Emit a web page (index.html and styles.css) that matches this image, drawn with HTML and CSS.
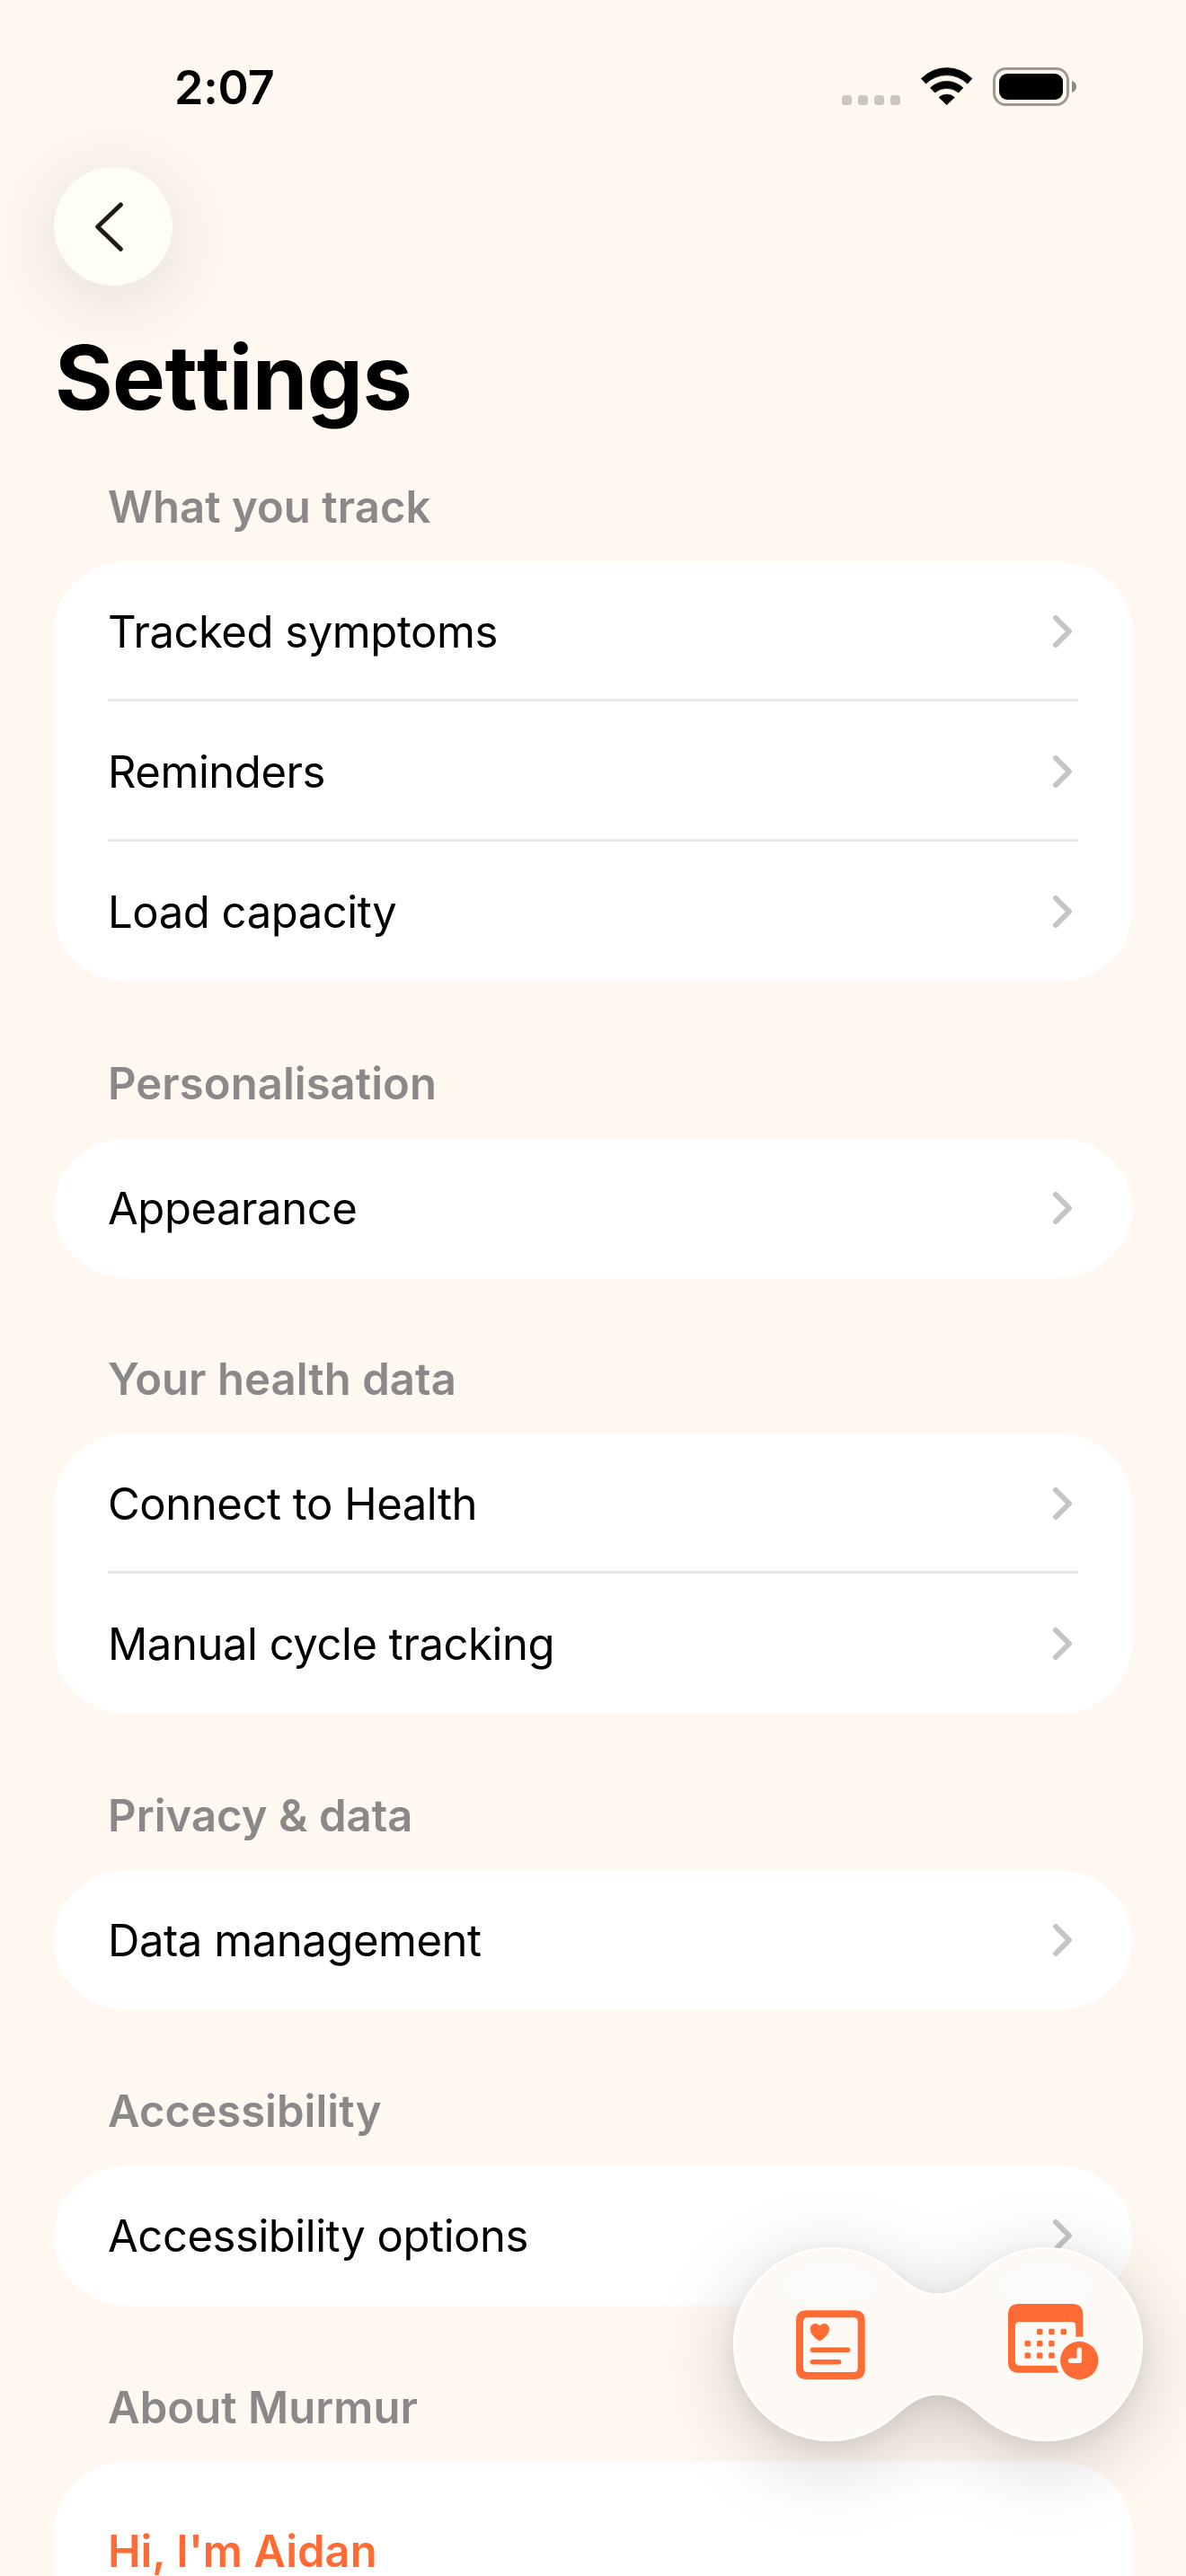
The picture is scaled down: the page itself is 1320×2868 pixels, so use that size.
FILE: index.html
```html
<!DOCTYPE html>
<html lang="en">
<head>
<meta charset="utf-8">
<title>Settings</title>
<link rel="stylesheet" href="styles.css">
</head>
<body>
<svg class="defs" width="0" height="0" aria-hidden="true">
  <symbol id="chevron" viewBox="0 0 30 36">
    <path d="M5 3L20 18L5 33" fill="none" stroke="#c5c5c7" stroke-width="6" stroke-linecap="round" stroke-linejoin="round"/>
  </symbol>
</svg>
<div class="screen">
  <div class="status">
    <span class="time">2:07</span>
    <div class="status-icons">
      <svg width="65" height="44" viewBox="0 0 65 44" fill="#ccc6c0">
        <rect x="0" y="31" width="11" height="11" rx="3.5"/>
        <rect x="18" y="31" width="11" height="11" rx="3.5"/>
        <rect x="36" y="31" width="11" height="11" rx="3.5"/>
        <rect x="54" y="31" width="11" height="11" rx="3.5"/>
      </svg>
      <svg width="60" height="44" viewBox="0 1 60 44" fill="#000" stroke="#000" stroke-width=".8" stroke-linejoin="round">
        <path d="M1.5 13.5A39.3 39.3 0 0 1 57.8 13.5L52.8 19.1A33 33 0 0 0 6.5 19.1Z"/>
        <path d="M11.5 23.7A26.6 26.6 0 0 1 47.8 23.7L42.8 29A20.7 20.7 0 0 0 16.5 29Z"/>
        <path d="M21.1 34.4A13 13 0 0 1 38.3 34.4L29.7 42.6Z"/>
      </svg>
      <svg width="94" height="44" viewBox="0 0 94 44">
        <rect x="1.5" y="1.5" width="82" height="40" rx="13" fill="none" stroke="#9c9892" stroke-width="3"/>
        <rect x="7" y="7" width="71" height="29" rx="9" fill="#000"/>
        <path d="M88 15C91 16 93 18.500 93 21.500S91 27 88 28Z" fill="#8c8883"/>
      </svg>
    </div>
  </div>

  <button class="back" aria-label="Back">
    <svg width="36" height="60" viewBox="0 0 36 60"><path d="M31.300 6L5.700 30.500L31.300 55.300" fill="none" stroke="#1f1a14" stroke-width="5" stroke-linecap="round" stroke-linejoin="round"/></svg>
  </button>
  <h1 class="title">Settings</h1>

  <section class="group">
    <h2 class="group-title">What you track</h2>
    <div class="card">
      <div class="row"><span>Tracked symptoms</span><svg class="chevron"><use href="#chevron"/></svg></div>
      <div class="row"><span>Reminders</span><svg class="chevron"><use href="#chevron"/></svg></div>
      <div class="row"><span>Load capacity</span><svg class="chevron"><use href="#chevron"/></svg></div>
    </div>
  </section>
  <section class="group">
    <h2 class="group-title">Personalisation</h2>
    <div class="card">
      <div class="row"><span>Appearance</span><svg class="chevron"><use href="#chevron"/></svg></div>
    </div>
  </section>
  <section class="group">
    <h2 class="group-title">Your health data</h2>
    <div class="card">
      <div class="row"><span>Connect to Health</span><svg class="chevron"><use href="#chevron"/></svg></div>
      <div class="row"><span>Manual cycle tracking</span><svg class="chevron"><use href="#chevron"/></svg></div>
    </div>
  </section>
  <section class="group">
    <h2 class="group-title">Privacy &amp; data</h2>
    <div class="card">
      <div class="row"><span>Data management</span><svg class="chevron"><use href="#chevron"/></svg></div>
    </div>
  </section>
  <section class="group">
    <h2 class="group-title">Accessibility</h2>
    <div class="card">
      <div class="row"><span>Accessibility options</span><svg class="chevron"><use href="#chevron"/></svg></div>
    </div>
  </section>
  <section class="group">
    <h2 class="group-title">About Murmur</h2>
    <div class="card about"><p class="hello">Hi, I'm Aidan</p></div>
  </section>

  <nav class="dock">
    <svg class="dock-shape" width="456" height="216" viewBox="0 0 456 216">
      <defs>
        <radialGradient id="shine">
          <stop offset="0" stop-color="#fbfbfb"/>
          <stop offset=".7" stop-color="#fbfbfb" stop-opacity=".8"/>
          <stop offset="1" stop-color="#fbfbfb" stop-opacity="0"/>
        </radialGradient>
        <clipPath id="blob">
          <path id="blob-path" d="M180 27.500C196 41.800 209 51.500 228 51.500C247 51.500 260 41.800 276 27.500A108 108 0 1 1 276 188.500C260 174.200 247 164.500 228 164.500C209 164.500 196 174.200 180 188.500A108 108 0 1 1 180 27.500Z"/>
        </clipPath>
      </defs>
      <use class="blob" href="#blob-path"/>
      <g clip-path="url(#blob)">
        <ellipse cx="108" cy="42" rx="62" ry="28" fill="url(#shine)"/>
        <ellipse cx="348" cy="42" rx="62" ry="28" fill="url(#shine)"/>
        <use href="#blob-path" class="rim"/>
      </g>
      <!-- Health log -->
      <g fill="#ff6b35">
        <path fill-rule="evenodd" d="M81.500 70.300H135.200Q146.700 70.300 146.700 81.800V135.500Q146.700 147 135.200 147H81.500Q70 147 70 135.500V81.800Q70 70.300 81.500 70.300ZM83 78.300Q78 78.300 78 83.300V134Q78 139 83 139H133.700Q138.700 139 138.700 134V83.300Q138.700 78.300 133.700 78.300Z"/>
        <path d="M96.350 104.300C95.200 104.300 85.700 98 85.700 91C85.700 87.500 88.200 85 91.300 85C93.500 85 95.400 86.100 96.350 87.600C97.300 86.100 99.200 85 101.400 85C104.500 85 107 87.500 107 91C107 98 97.500 104.300 96.350 104.300Z"/>
      </g>
      <path d="M88.400 114.200H127.600M88.400 127.700H117.600" stroke="#ff6b35" stroke-width="5.500" stroke-linecap="round"/>
      <!-- Calendar with clock -->
      <g fill="#ff6b35">
        <path fill-rule="evenodd" d="M318 63H377.300Q389.300 63 389.300 75V139.700H318Q306 139.700 306 127.700V75Q306 63 318 63ZM319 83Q314 83 314 88V126.700Q314 131.700 319 131.700H381.300V88Q381.300 83 376.300 83Z"/>
        <rect x="338" y="90.700" width="6.500" height="6.500" rx="1.500"/><rect x="351.200" y="90.700" width="6.500" height="6.500" rx="1.500"/><rect x="364.500" y="90.700" width="6.500" height="6.500" rx="1.500"/>
        <rect x="324.500" y="104" width="6.500" height="6.500" rx="1.500"/><rect x="338" y="104" width="6.500" height="6.500" rx="1.500"/><rect x="351.200" y="104" width="6.500" height="6.500" rx="1.500"/>
        <rect x="324.500" y="117.200" width="6.500" height="6.500" rx="1.500"/><rect x="338" y="117.200" width="6.500" height="6.500" rx="1.500"/><rect x="351.200" y="117.200" width="6.500" height="6.500" rx="1.500"/>
      </g>
      <circle cx="385.300" cy="126" r="26.500" fill="#fdfaf5"/>
      <circle cx="385.300" cy="126" r="21.200" fill="#ff6b35"/>
      <path d="M385.300 114.200V126.200H375.600" fill="none" stroke="#fdfaf5" stroke-width="5.500" stroke-linecap="round" stroke-linejoin="round"/>
    </svg>
  </nav>
</div>
</body>
</html>
```
FILE: styles.css
```css
* { box-sizing: border-box; margin: 0; padding: 0; }

body { background: #fff8f0; }

.defs { display: block; }

.screen {
  position: relative;
  width: 1320px;
  height: 2868px;
  overflow: hidden;
  padding: 0 60px;
  background: #fff8f0;
  color: #000;
  font-family: Inter, "Liberation Sans", sans-serif;
}

.status {
  display: flex;
  align-items: flex-start;
  justify-content: space-between;
  height: 186px;
  padding: 68px 61px 0 134px;
}

.time {
  font-size: 52px;
  font-weight: 600;
  line-height: 60px;
  letter-spacing: -0.2px;
}

.status-icons { display: flex; gap: 21.5px; padding-top: 7px; }
.status-icons svg { display: block; }

.back {
  display: flex;
  align-items: center;
  width: 132px;
  height: 132px;
  padding: 0 0 0 43px;
  border: 0;
  border-radius: 50%;
  background: #fffef6;
  box-shadow: 0 14px 90px rgba(0, 0, 0, .12);
}

.back svg { display: block; }

.title {
  margin: 42px 0 55px 1px;
  font-size: 99px;
  font-weight: 700;
  font-kerning: none;
  font-feature-settings: "calt" 0;
  line-height: 120px;
  letter-spacing: -0.7px;
}

.group { margin-bottom: 83.6px; }

.group-title {
  padding: 0 60px;
  margin-bottom: 30px;
  color: #8a8888;
  font-size: 49px;
  font-weight: 600;
  line-height: 60px;
  letter-spacing: 0.05px;
}

.card {
  padding: 0 60px;
  border-radius: 82px / 78px;
  background: #fff;
}

.row {
  display: flex;
  align-items: center;
  justify-content: space-between;
  height: 156px;
  padding-top: 5px;
  border-bottom: 3px solid #e8e8e8;
  font-size: 49px;
  line-height: 60px;
  letter-spacing: -0.45px;
}

.row:last-child { border-bottom-color: transparent; }

.chevron { width: 30px; height: 36px; margin-bottom: 2px; }

.about { height: 400px; padding-top: 70px; }

.hello {
  color: #ff6b35;
  font-size: 49px;
  font-weight: 600;
  line-height: 60px;
}

.dock { position: absolute; left: 816px; top: 2502px; }
.dock-shape { display: block; overflow: visible; }

.blob {
  fill: #fdfaf5;
  filter: drop-shadow(0 6px 12px rgba(0, 0, 0, .06)) drop-shadow(0 20px 42px rgba(0, 0, 0, .19));
}

.rim { fill: none; stroke: #fffefa; stroke-width: 5px; }
```
